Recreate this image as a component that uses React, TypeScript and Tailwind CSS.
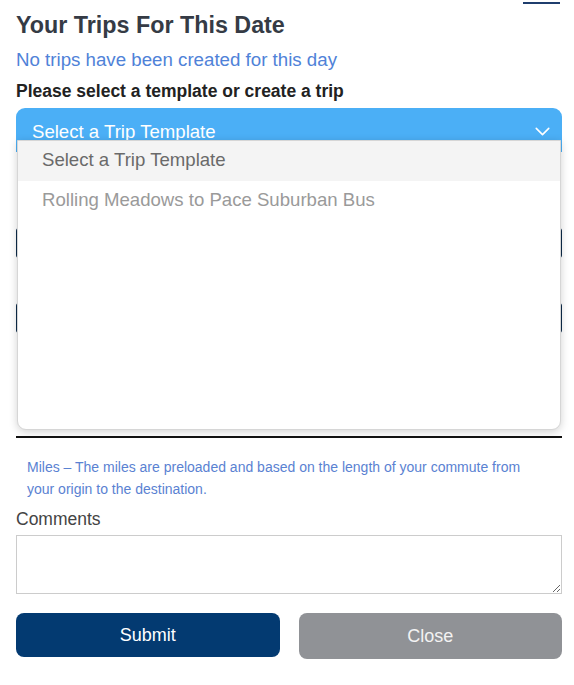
import { ChevronDown } from 'lucide-react';

const font = { fontFamily: '"Liberation Sans", Arial, sans-serif' };

const TemplateSelect = (): JSX.Element => {
  const options = ['Select a Trip Template', 'Rolling Meadows to Pace Suburban Bus'];
  return (
    <div className="relative mt-[5px]">
      <div className="flex h-[44px] items-start justify-between overflow-hidden rounded-t-[9px] bg-[#4baff6] pl-4 pr-[7px] text-white">
        <span className="text-[18.6px] leading-[48px]">Select a Trip Template</span>
        <ChevronDown size={25} strokeWidth={1.5} className="mt-[11px]" />
      </div>
      <div className="absolute left-px right-px top-[32px] z-10 h-[290px] overflow-hidden rounded-b-[9px] border border-[#d6d6d6] bg-white shadow-[0_2px_8px_rgba(0,0,0,0.18)]">
        {options.map((label, index) => (
          <div
            key={label}
            className={
              index === 0
                ? 'h-[40px] bg-[#f4f4f4] pl-6 text-[18.6px] leading-[38px] text-[#6a6a6a]'
                : 'h-[40px] pl-6 text-[18.6px] leading-[38px] text-[#9a9a9a]'
            }
          >
            {label}
          </div>
        ))}
      </div>
    </div>
  );
};

export default function App(): JSX.Element {
  return (
    <div className="h-[685px] w-[574px] overflow-hidden bg-white pl-4 pr-3" style={font}>
      <div className="flex h-0 justify-end pr-[2px]">
        <span className="mt-[1px] block h-[3px] w-[37px] border-b-2 border-[#1f3d6d]" />
      </div>

      <h1 className="pt-[10px] text-[23.3px] font-bold leading-[30px] text-[#353b45]">Your Trips For This Date</h1>
      <p className="mt-[7px] text-[18.7px] leading-[26px] text-[#4f82d8]">No trips have been created for this day</p>
      <p className="mt-[6px] text-[17.5px] font-bold leading-[24px] text-[#222]">Please select a template or create a trip</p>

      <TemplateSelect />

      {/* fields hidden behind the open list */}
      <div className="flex h-[284px] flex-col">
        <div className="mt-[76px] h-[30px] rounded-[3px] border-x-[1.5px] border-[#0d2b4a]" />
        <div className="mt-[45px] h-[30px] rounded-[3px] border-x-[1.5px] border-[#0d2b4a]" />
      </div>
      <div className="h-[2px] bg-[#111]" />

      <p className="mt-[18px] pl-[11px] pr-[25px] text-[14px] leading-[22px] text-[#5a82d2]">
        Miles – The miles are preloaded and based on the length of your commute from your origin to the destination.
      </p>

      <label className="mt-[7px] block text-[17.5px] leading-[24px] text-[#444]">Comments</label>
      <textarea className="mt-[4px] block h-[59px] w-full border border-[#cccccc] bg-white" />

      <div className="mt-[19px] flex gap-[19px]">
        <button className="h-[44px] flex-1 rounded-[8px] bg-[#033a71] text-[18px] text-white">Submit</button>
        <button className="h-[46px] flex-1 rounded-[8px] bg-[#909296] text-[18px] text-[#f3f3f3]">Close</button>
      </div>
    </div>
  );
}
